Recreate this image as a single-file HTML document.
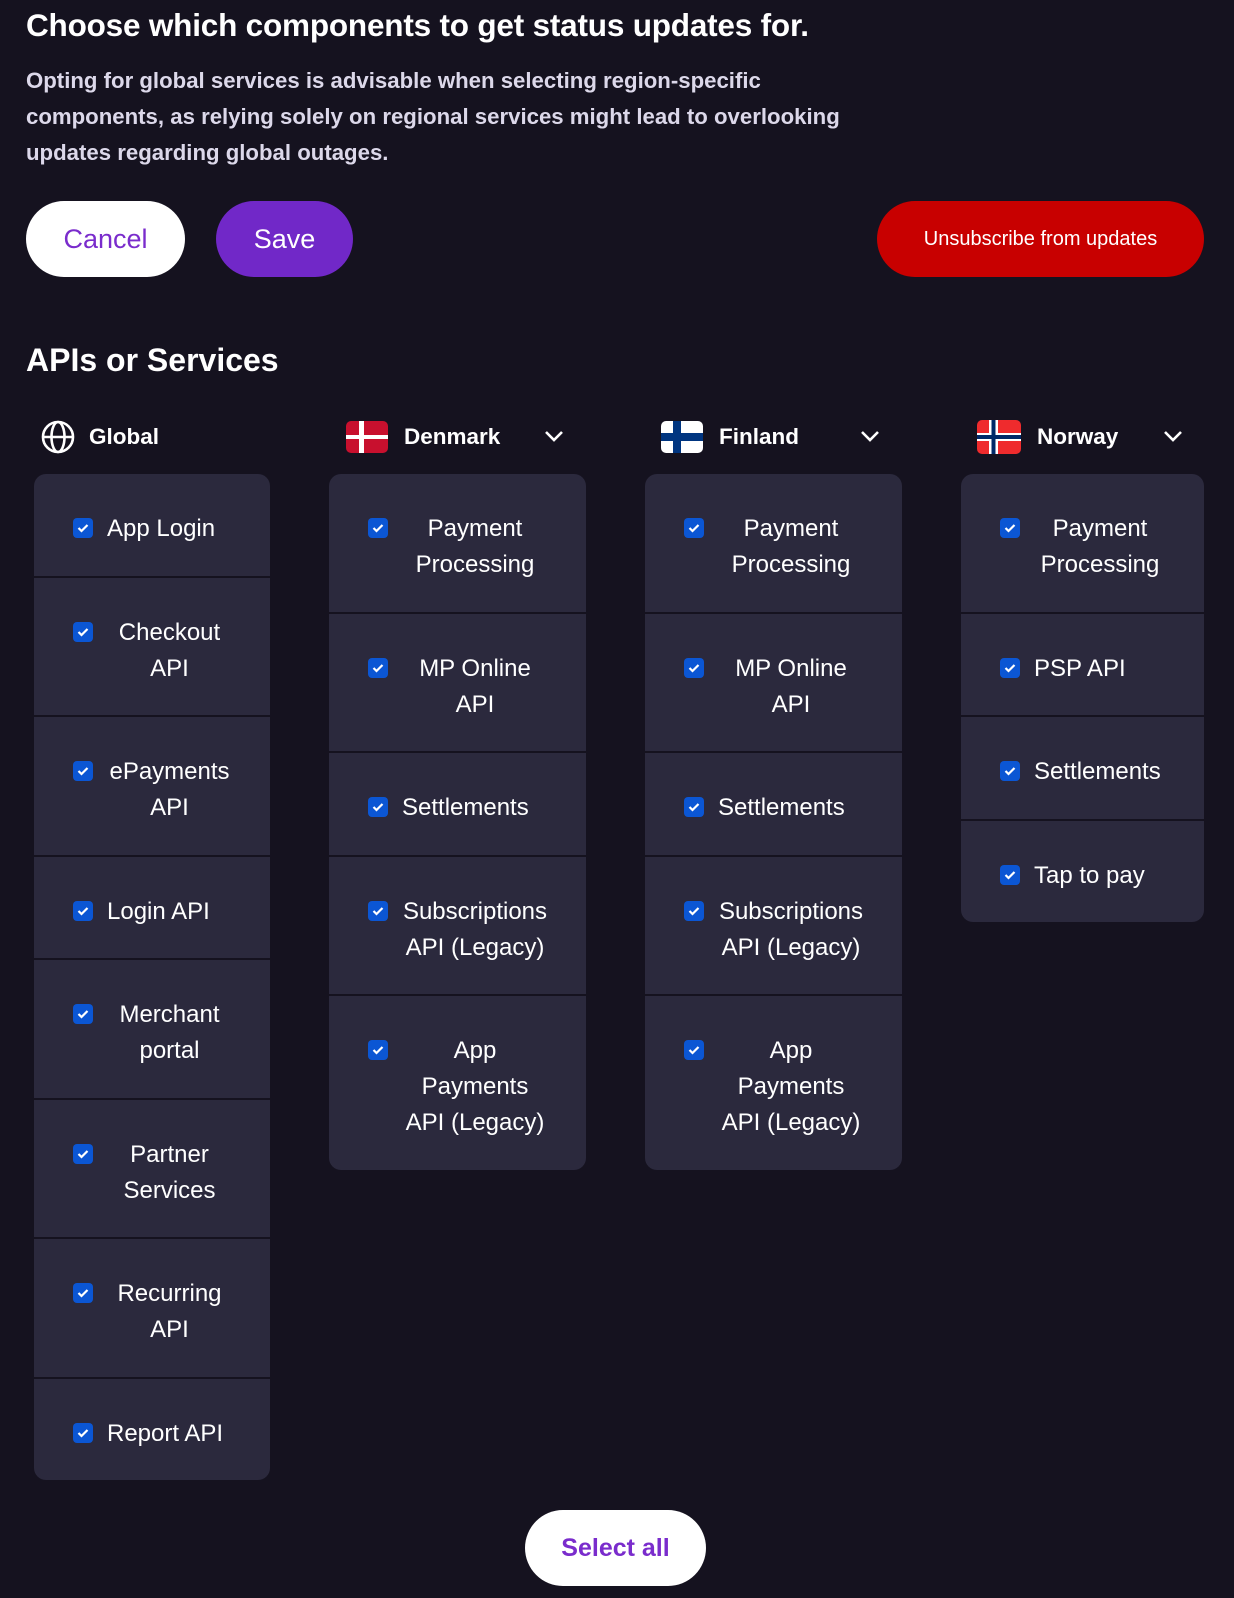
<!DOCTYPE html>
<html><head><meta charset="utf-8"><style>
*{box-sizing:border-box;margin:0;padding:0}
html,body{width:1234px;height:1598px;background:#15121f;overflow:hidden;font-family:"Liberation Sans",sans-serif;color:#fff}
.h1{position:absolute;left:26px;top:7px;font-size:31.5px;font-weight:bold;letter-spacing:-0.2px}
.p{position:absolute;left:26px;top:63px;font-size:22.2px;line-height:36px;color:#dcd8ea;font-weight:bold;white-space:nowrap}
.btn{position:absolute;top:201px;height:76px;border-radius:38px;display:flex;align-items:center;justify-content:center;font-size:27px}
.h2{position:absolute;left:26px;top:342px;font-size:32px;font-weight:bold}
.hdr{position:absolute;top:419px;height:36px;display:flex;align-items:center;font-size:22.5px;font-weight:bold}
.chev{position:absolute;top:425px}
.col{position:absolute;top:474px;background:#2b293d;border-radius:12px;overflow:hidden}
.row{display:flex;align-items:flex-start;padding:37px 38px 28.5px 39px;border-top:2px solid #15121f;font-size:24px;line-height:36px;white-space:nowrap}
.row:first-child{border-top:none}
.cb{width:20px;height:20px;background:#0b56d4;border-radius:4px;margin-top:7px;flex:none;display:flex;align-items:center;justify-content:center}
.lb{margin-left:14px}
.lb.w{flex:1;text-align:center}
</style></head><body>
<div class="h1">Choose which components to get status updates for.</div>
<div class="p">Opting for global services is advisable when selecting region-specific<br>components, as relying solely on regional services might lead to overlooking<br>updates regarding global outages.</div>
<div class="btn" style="left:26px;width:159px;background:#fff;color:#7a2ccc">Cancel</div>
<div class="btn" style="left:216px;width:137px;background:#7128c8;color:#fff">Save</div>
<div class="btn" style="left:877px;width:327px;background:#c80000;color:#fff;font-size:20px">Unsubscribe from updates</div>
<div class="h2">APIs or Services</div>

<div class="hdr" style="left:41px"><svg width="34" height="34" viewBox="0 0 34 34" fill="none" stroke="#fff" stroke-width="2.6"><circle cx="17" cy="17" r="15"/><ellipse cx="17" cy="17" rx="6.5" ry="15"/><line x1="2" y1="17" x2="32" y2="17"/></svg><span style="margin-left:14px">Global</span></div>
<div class="hdr" style="left:346px"><svg width="42" height="32" viewBox="0 0 42 32"><rect width="42" height="32" rx="5" fill="#c8102e"/><rect x="13" width="5" height="32" fill="#fff"/><rect y="14" width="42" height="4" fill="#fff"/></svg><span style="margin-left:16px">Denmark</span></div>
<div class="hdr" style="left:661px"><svg width="42" height="32" viewBox="0 0 42 32"><rect width="42" height="32" rx="5" fill="#fff"/><rect x="12" width="8" height="32" fill="#003580"/><rect y="12" width="42" height="8" fill="#003580"/></svg><span style="margin-left:16px">Finland</span></div>
<div class="hdr" style="left:977px"><svg width="44" height="34" viewBox="0 0 44 34"><rect width="44" height="34" rx="5" fill="#ef2b2d"/><rect x="12" width="9" height="34" fill="#fff"/><rect y="13" width="44" height="8" fill="#fff"/><rect x="14.5" width="4" height="34" fill="#002868"/><rect y="15" width="44" height="4" fill="#002868"/></svg><span style="margin-left:16px">Norway</span></div>
<svg class="chev" style="left:543px" width="22" height="22" viewBox="0 0 22 22" fill="none" stroke="#fff" stroke-width="2.6"><path d="M3 7l8 8 8-8"/></svg>
<svg class="chev" style="left:859px" width="22" height="22" viewBox="0 0 22 22" fill="none" stroke="#fff" stroke-width="2.6"><path d="M3 7l8 8 8-8"/></svg>
<svg class="chev" style="left:1162px" width="22" height="22" viewBox="0 0 22 22" fill="none" stroke="#fff" stroke-width="2.6"><path d="M3 7l8 8 8-8"/></svg>

<div class="col" style="left:34px;width:236px">
<div class="row"><span class="cb"><svg width="12" height="10" viewBox="0 0 12 10" fill="none" stroke="#fff" stroke-width="2.2"><path d="M1.5 5l3 3 6-6"/></svg></span><span class="lb">App Login</span></div>
<div class="row"><span class="cb"><svg width="12" height="10" viewBox="0 0 12 10" fill="none" stroke="#fff" stroke-width="2.2"><path d="M1.5 5l3 3 6-6"/></svg></span><span class="lb w">Checkout<br>API</span></div>
<div class="row"><span class="cb"><svg width="12" height="10" viewBox="0 0 12 10" fill="none" stroke="#fff" stroke-width="2.2"><path d="M1.5 5l3 3 6-6"/></svg></span><span class="lb w">ePayments<br>API</span></div>
<div class="row"><span class="cb"><svg width="12" height="10" viewBox="0 0 12 10" fill="none" stroke="#fff" stroke-width="2.2"><path d="M1.5 5l3 3 6-6"/></svg></span><span class="lb">Login API</span></div>
<div class="row"><span class="cb"><svg width="12" height="10" viewBox="0 0 12 10" fill="none" stroke="#fff" stroke-width="2.2"><path d="M1.5 5l3 3 6-6"/></svg></span><span class="lb w">Merchant<br>portal</span></div>
<div class="row"><span class="cb"><svg width="12" height="10" viewBox="0 0 12 10" fill="none" stroke="#fff" stroke-width="2.2"><path d="M1.5 5l3 3 6-6"/></svg></span><span class="lb w">Partner<br>Services</span></div>
<div class="row"><span class="cb"><svg width="12" height="10" viewBox="0 0 12 10" fill="none" stroke="#fff" stroke-width="2.2"><path d="M1.5 5l3 3 6-6"/></svg></span><span class="lb w">Recurring<br>API</span></div>
<div class="row"><span class="cb"><svg width="12" height="10" viewBox="0 0 12 10" fill="none" stroke="#fff" stroke-width="2.2"><path d="M1.5 5l3 3 6-6"/></svg></span><span class="lb">Report API</span></div>
</div>

<div class="col" style="left:329px;width:257px">
<div class="row"><span class="cb"><svg width="12" height="10" viewBox="0 0 12 10" fill="none" stroke="#fff" stroke-width="2.2"><path d="M1.5 5l3 3 6-6"/></svg></span><span class="lb w">Payment<br>Processing</span></div>
<div class="row"><span class="cb"><svg width="12" height="10" viewBox="0 0 12 10" fill="none" stroke="#fff" stroke-width="2.2"><path d="M1.5 5l3 3 6-6"/></svg></span><span class="lb w">MP Online<br>API</span></div>
<div class="row"><span class="cb"><svg width="12" height="10" viewBox="0 0 12 10" fill="none" stroke="#fff" stroke-width="2.2"><path d="M1.5 5l3 3 6-6"/></svg></span><span class="lb">Settlements</span></div>
<div class="row"><span class="cb"><svg width="12" height="10" viewBox="0 0 12 10" fill="none" stroke="#fff" stroke-width="2.2"><path d="M1.5 5l3 3 6-6"/></svg></span><span class="lb w">Subscriptions<br>API (Legacy)</span></div>
<div class="row"><span class="cb"><svg width="12" height="10" viewBox="0 0 12 10" fill="none" stroke="#fff" stroke-width="2.2"><path d="M1.5 5l3 3 6-6"/></svg></span><span class="lb w">App<br>Payments<br>API (Legacy)</span></div>
</div>

<div class="col" style="left:645px;width:257px">
<div class="row"><span class="cb"><svg width="12" height="10" viewBox="0 0 12 10" fill="none" stroke="#fff" stroke-width="2.2"><path d="M1.5 5l3 3 6-6"/></svg></span><span class="lb w">Payment<br>Processing</span></div>
<div class="row"><span class="cb"><svg width="12" height="10" viewBox="0 0 12 10" fill="none" stroke="#fff" stroke-width="2.2"><path d="M1.5 5l3 3 6-6"/></svg></span><span class="lb w">MP Online<br>API</span></div>
<div class="row"><span class="cb"><svg width="12" height="10" viewBox="0 0 12 10" fill="none" stroke="#fff" stroke-width="2.2"><path d="M1.5 5l3 3 6-6"/></svg></span><span class="lb">Settlements</span></div>
<div class="row"><span class="cb"><svg width="12" height="10" viewBox="0 0 12 10" fill="none" stroke="#fff" stroke-width="2.2"><path d="M1.5 5l3 3 6-6"/></svg></span><span class="lb w">Subscriptions<br>API (Legacy)</span></div>
<div class="row"><span class="cb"><svg width="12" height="10" viewBox="0 0 12 10" fill="none" stroke="#fff" stroke-width="2.2"><path d="M1.5 5l3 3 6-6"/></svg></span><span class="lb w">App<br>Payments<br>API (Legacy)</span></div>
</div>

<div class="col" style="left:961px;width:243px">
<div class="row"><span class="cb"><svg width="12" height="10" viewBox="0 0 12 10" fill="none" stroke="#fff" stroke-width="2.2"><path d="M1.5 5l3 3 6-6"/></svg></span><span class="lb w">Payment<br>Processing</span></div>
<div class="row"><span class="cb"><svg width="12" height="10" viewBox="0 0 12 10" fill="none" stroke="#fff" stroke-width="2.2"><path d="M1.5 5l3 3 6-6"/></svg></span><span class="lb">PSP API</span></div>
<div class="row"><span class="cb"><svg width="12" height="10" viewBox="0 0 12 10" fill="none" stroke="#fff" stroke-width="2.2"><path d="M1.5 5l3 3 6-6"/></svg></span><span class="lb">Settlements</span></div>
<div class="row"><span class="cb"><svg width="12" height="10" viewBox="0 0 12 10" fill="none" stroke="#fff" stroke-width="2.2"><path d="M1.5 5l3 3 6-6"/></svg></span><span class="lb">Tap to pay</span></div>
</div>

<div class="btn" style="left:525px;top:1510px;width:181px;background:#fff;color:#7a2ccc;font-size:25px;font-weight:bold">Select all</div>
</body></html>
